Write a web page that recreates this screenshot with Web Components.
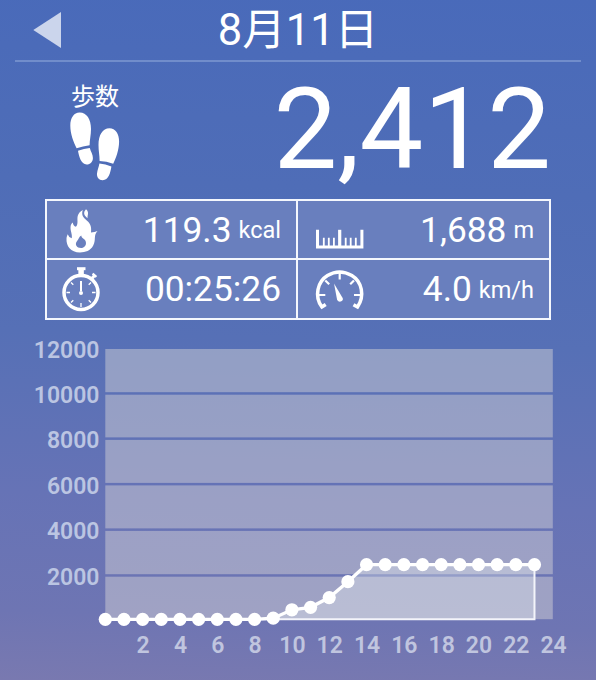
<!DOCTYPE html>
<html lang="ja">
<head>
<meta charset="utf-8">
<title>8月11日</title>
<style>
    html, body {
        margin: 0;
        height: 100%;
    }
    body {
        font-family: Roboto, "Noto Sans CJK JP", sans-serif;
        color: #ffffff;
        overflow: hidden;
    }
</style>
</head>
<body>
<pedometer-app></pedometer-app>

<script>
const ICONS = {
    steps: /*html*/`
        <svg width="50" height="70" viewBox="0 0 50 70" fill="#fff">
            <path d="M6.600 36.200C3.500 30 .3 22 .3 13.500C.3 5.500 4 .6 9.500 .4C16.500 .2 21 7 21 17C21 23.500 19.600 28 19.600 33.200Q13 34 6.600 36.200Z"/>
            <path d="M8 38.800Q14 36.600 19.800 36C20.800 39.800 22.900 42.500 22.900 46C22.900 50 20 52.600 16.700 52.500C11 52.300 9 44.500 8 38.800Z"/>
            <path d="M29.600 49C29.600 43 28.500 39 28.500 33C28.500 23 32.500 16.300 39.500 16.200C45.500 16.200 49.200 22 49.100 29.500C49 38 46 46 43.200 51.700Q36.500 49.400 29.600 49Z"/>
            <path d="M29.400 51.400Q35.500 52 41.400 54.500C40.400 61 38.500 68 32.700 68.200C29 68.300 26.600 65.300 27 61.500C27.300 58 28.900 55 29.400 51.400Z"/>
        </svg>`,
    flame: /*html*/`
        <svg width="50" height="50" viewBox="-0.500 -1 50 50" fill="#fff">
            <path fill-rule="evenodd" d="M19.500 46.500C10 46.500 5.500 40 6 32.500C6.100 30.500 6.700 29.500 7.200 28.200Q8.400 31.700 11.300 32.300C11.900 27.500 9.600 25 10.100 20.500C10.300 18.800 11 17.500 12.300 16.500Q12.600 20 15.400 20.800C18.200 17.800 16.300 14 17.200 10Q18.200 6 22.300 4C20.900 8.500 22.200 11 25.200 13.500C28.800 16.500 31.500 19.500 30.500 26.500Q34.200 26 37 25C32.500 30 36 33.500 32.600 39.800C30 44.600 25 46.500 19.500 46.500ZM21 42C25 41.700 26.500 37.800 24.800 34.600C23.600 32.400 21 32.500 20.800 29.500C18.500 30.700 18.300 33 16.600 35C13.700 38.400 16.500 42.300 21 42Z"/>
            <path d="M25.500 3.300C22.500 6.500 23.300 9.300 27 12.200C26.900 8.800 29 6.300 25.500 3.300Z"/>
        </svg>`,
    stopwatch: /*html*/`
        <svg width="50" height="50" viewBox="0 1 50 50" fill="none" stroke="#fff">
            <circle cx="21" cy="29.500" r="17" stroke-width="3.500"/>
            <path d="M17 5.700H25.500" stroke-width="3"/>
            <path d="M21.100 7V13" stroke-width="5.500"/>
            <path d="M31.500 16L34.500 12.500" stroke-width="3"/>
            <path d="M32.600 10.600L36.400 13.800" stroke-width="2.300"/>
            <path d="M21 18V28" stroke-width="2"/>
            <path d="M21 40V44M6.500 29.500H10M32 29.500H35.500M11 19.500L13.300 21.800M31 19.500L28.700 21.800M11 39.500L13.300 37.200M31 39.500L28.700 37.200" stroke-width="1.300"/>
            <circle cx="21" cy="30" r="2" fill="#fff" stroke="none"/>
        </svg>`,
    ruler: /*html*/`
        <svg width="50" height="50" viewBox="-4 -1.300 50 50" fill="none" stroke="#fff">
            <path d="M2.500 23.500V40.800H46.900V23.500" stroke-width="3"/>
            <path d="M24.700 23.500V41" stroke-width="3.200"/>
            <path d="M8.800 31.500V40M13.800 31.500V40M18.900 31.500V40M30.700 31.500V40M35.700 31.500V40M40.800 31.500V40" stroke-width="1.800"/>
        </svg>`,
    gauge: /*html*/`
        <svg width="50" height="50" viewBox="-4 -2 50 50" fill="none" stroke="#fff">
            <path d="M10.700 38.500L6.900 41C-1 30.500 2.500 15.500 12.500 9.500C20 5 29 5 36.800 9.500C47 15.500 50 30 42.500 41L38.500 38.700" stroke-width="3.500"/>
            <path d="M24.700 7V13.500M10.300 14.500L14.200 18.300M39 14.500L35.200 18.300M3.500 29H10.300M39 29H46" stroke-width="2.200"/>
            <path d="M19 17.500L27.500 31.800C29.300 35 23.800 37.500 22.100 33.800Z" fill="#fff" stroke="none"/>
        </svg>`
};

class PageHeader extends HTMLElement {
    constructor() {
        super();
        this.attachShadow({ mode: 'open' });
        this.shadowRoot.innerHTML = /*html*/`
            <style>
            :host {
                display: grid;
                grid-template-columns: 60px 1fr 60px;
                align-items: center;
                box-sizing: border-box;
                height: 62px;
                margin: 0 15px;
                border-bottom: 2px solid #718dcb;
            }
            svg {
                display: block;
                margin-left: 18px;
            }
            h1 {
                margin: 0;
                padding-top: 2px;
                text-align: center;
                font-size: 43.500px;
                font-weight: 400;
                line-height: 58px;
                white-space: nowrap;
            }
            </style>
            <svg width="29" height="38" viewBox="0 0 29 38"><path d="M.3 19L28 1V37Z" fill="#cbd5ec"/></svg>
            <h1><slot></slot></h1>
        `;
    }
}

class StepTotal extends HTMLElement {
    constructor() {
        super();
        this.attachShadow({ mode: 'open' });
        this.shadowRoot.innerHTML = /*html*/`
            <style>
            :host {
                display: flex;
                justify-content: space-between;
                box-sizing: border-box;
                height: 137px;
                padding: 20px 45px 0 70px;
            }
            .label {
                display: flex;
                flex-direction: column;
                align-items: center;
                padding-top: 1px;
                font-size: 24px;
                line-height: 29px;
            }
            .label svg {
                display: block;
            }
            .total {
                font-size: 113.500px;
                line-height: 96px;
            }
            </style>
            <div class="label"><slot name="label"></slot>${ICONS.steps}</div>
            <div class="total"><slot></slot></div>
        `;
    }
}

class StatCell extends HTMLElement {
    constructor() {
        super();
        this.attachShadow({ mode: 'open' });
        this.shadowRoot.innerHTML = /*html*/`
            <style>
            :host {
                display: flex;
                align-items: center;
                justify-content: space-between;
                padding: 0 15px 0 13px;
                background: #697fbe;
            }
            svg {
                display: block;
                overflow: visible;
            }
            .value {
                font-size: 35.300px;
                line-height: 50px;
                white-space: nowrap;
            }
            .unit {
                font-size: 23.500px;
                line-height: 0;
                vertical-align: 3.500px;
                margin-left: 7px;
            }
            </style>
            ${ICONS[this.getAttribute('icon')]}
            <div class="value"><slot></slot></div>
        `;
        const unit = this.getAttribute('unit');
        if (unit) {
            const el = document.createElement('span');
            el.className = 'unit';
            el.textContent = unit;
            this.shadowRoot.querySelector('.value').append(el);
        }
    }
}

class StatGrid extends HTMLElement {
    constructor() {
        super();
        this.attachShadow({ mode: 'open' });
        this.shadowRoot.innerHTML = /*html*/`
            <style>
            :host {
                display: grid;
                grid-template-columns: 249px 251px;
                grid-template-rows: 57px 58px;
                gap: 2px;
                box-sizing: border-box;
                width: 506px;
                height: 121px;
                margin: 0 0 0 45px;
                border: 2px solid #f4f7fd;
                background: #f4f7fd;
            }
            </style>
            <slot></slot>
        `;
    }
}

class StepChart extends HTMLElement {
    constructor() {
        super();
        this.attachShadow({ mode: 'open' });

        const steps = this.getAttribute('steps').split(',').map(Number);
        const px = (hour) => 10.300 + hour * 18.66;
        const py = (n) => 280.300 - n * 0.02265;
        const points = steps.map((n, i) => `${px(i)},${py(n)}`);
        const line = points.join(' ');
        const last = px(steps.length - 1);

        // translucent bands leave the page gradient visible as grid lines
        const edges = [10, 54.500, 99.700, 145.200, 190.700, 236.500, 281.500];
        const bands = edges.slice(0, -1).map((top, i) => {
            const y = i ? top + 1.200 : top;
            const h = edges[i + 1] - 1.300 - y;
            return `<rect x="10.300" y="${y}" width="447.500" height="${h}"/>`;
        }).join('');

        this.shadowRoot.innerHTML = /*html*/`
            <style>
            :host {
                display: grid;
                grid-template-columns: 99.500px 468px;
                margin-top: 19px;
                font-size: 23px;
                font-weight: 600;
                color: #bbc5e2;
            }
            .y {
                display: flex;
                flex-direction: column;
                text-align: right;
                line-height: 45.450px;
                margin-top: -11.500px;
            }
            .plot {
                display: block;
                margin-left: -4.500px;
            }
            .x {
                grid-column: 2;
                display: grid;
                grid-template-columns: repeat(12, 37.320px);
                margin: 1px 0 0 25px;
                text-align: center;
                line-height: 28px;
                color: #c0c5df;
            }
            </style>
            <div class="y">${[12000, 10000, 8000, 6000, 4000, 2000].map((n) => `<span>${n}</span>`).join('')}</div>
            <svg class="plot" width="468" height="292" viewBox="0 0 468 292">
                <g fill="#e5e1dc" fill-opacity="0.42">${bands}</g>
                <polygon points="${line} ${last},280.300 ${px(0)},280.300" fill="#f4fbfa" fill-opacity="0.3"/>
                <path d="M${px(0)} 280.300H${last}V${py(steps[steps.length - 1])}" fill="none" stroke="#f3f4fa" stroke-width="2"/>
                <polyline points="${line}" fill="none" stroke="#fff" stroke-width="3.300"/>
                <g fill="#fff">${steps.map((n, i) => `<circle cx="${px(i)}" cy="${py(n)}" r="6.600"/>`).join('')}</g>
            </svg>
            <div class="x">${steps.slice(0, 12).map((_, i) => `<span>${i * 2 + 2}</span>`).join('')}</div>
        `;
    }
}

class PedometerApp extends HTMLElement {
    constructor() {
        super();
        this.attachShadow({ mode: 'open' });
        this.shadowRoot.innerHTML = /*html*/`
            <style>
            :host {
                display: flex;
                flex-direction: column;
                width: 596px;
                height: 680px;
                background: linear-gradient(182deg, #496aba 0%, #4f6db7 28%, #5670b6 50%, #6673b6 73%, #6e75b3 90%, #7979b0 100%);
            }
            </style>
            <page-header>8月11日</page-header>
            <step-total><span slot="label">歩数</span>2,412</step-total>
            <stat-grid>
                <stat-cell icon="flame" unit="kcal">119.3</stat-cell>
                <stat-cell icon="ruler" unit="m">1,688</stat-cell>
                <stat-cell icon="stopwatch">00:25:26</stat-cell>
                <stat-cell icon="gauge" unit="km/h">4.0</stat-cell>
            </stat-grid>
            <step-chart steps="0,0,0,0,0,0,0,0,0,50,420,530,960,1660,2412,2412,2412,2412,2412,2412,2412,2412,2412,2412"></step-chart>
        `;
    }
}

window.customElements.define('page-header', PageHeader);
window.customElements.define('step-total', StepTotal);
window.customElements.define('stat-cell', StatCell);
window.customElements.define('stat-grid', StatGrid);
window.customElements.define('step-chart', StepChart);
window.customElements.define('pedometer-app', PedometerApp);
</script>
</body>
</html>
